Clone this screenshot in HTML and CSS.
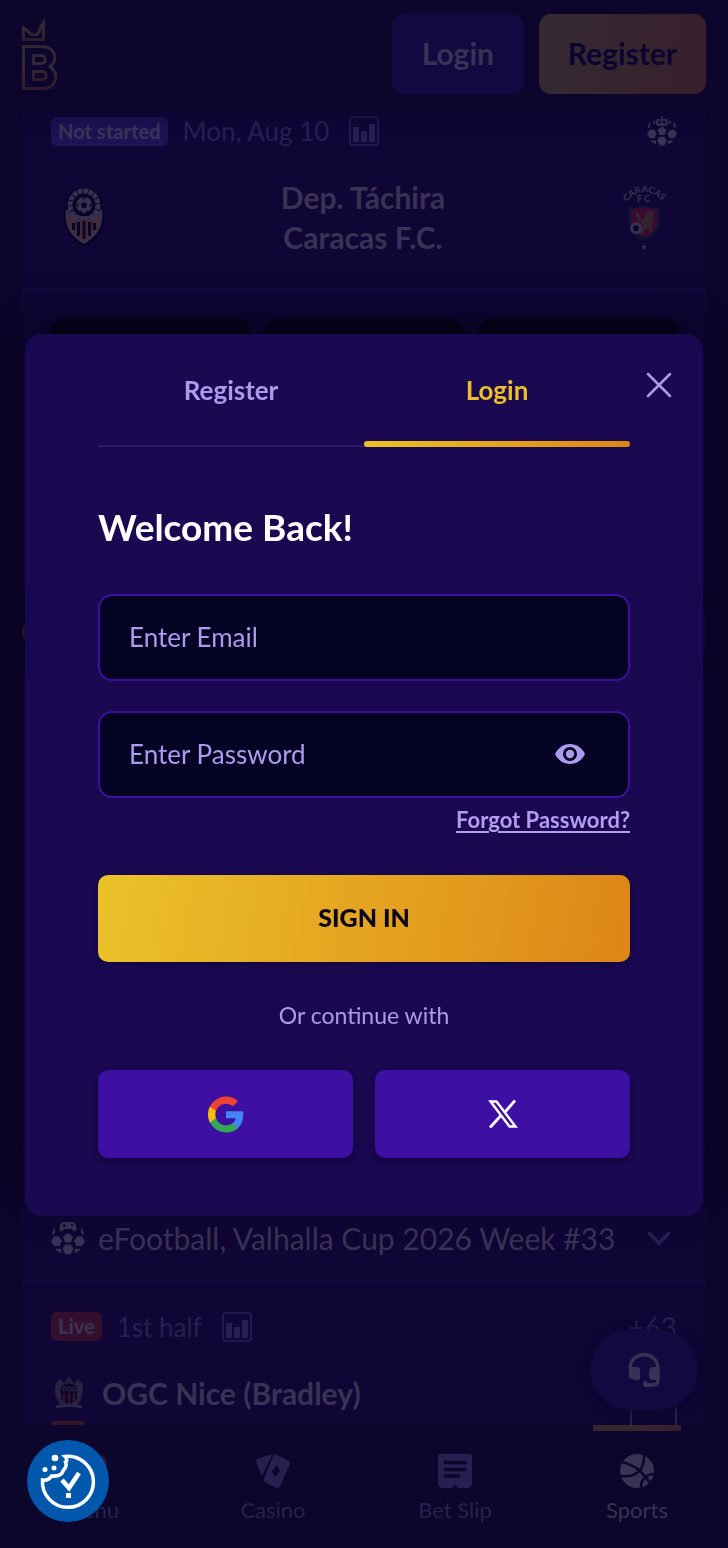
FILE: index.html
```html
<!DOCTYPE html>
<html lang="en">
<head>
<meta charset="utf-8">
<meta name="viewport" content="width=device-width, initial-scale=1">
<title>Login</title>
<link rel="stylesheet" href="styles.css">
</head>
<body>
<svg width="0" height="0" class="defs" aria-hidden="true">
  <defs>
    <linearGradient id="gold" x1="0" y1="0" x2="0" y2="1"><stop offset="0" stop-color="#302638"/><stop offset=".5" stop-color="#362736"/><stop offset="1" stop-color="#2f1b2b"/></linearGradient>
    <symbol id="ball" viewBox="0 0 34 34">
      <path d="M17 12l5 3.500-2 6h-6l-2-6zM3 15.500h5l3 4.500-2.500 5H3L0 20.500zM31 15.500h-5L23 20l2.500 5H31l3-4.500zM14 23.500h6l2.500 4.500-3 5.500h-5l-3-5.500zM3.500 6l.5 6-3 2q0-4 2.500-8zM30.500 6l-.5 6 3 2q0-4-2.500-8zM4 28l6-.5.500 4.500q-4-1-6.500-4zM30 28l-6-.5-.5 4.500q4-1 6.500-4z"/>
    </symbol>
    <symbol id="stats" viewBox="0 0 30 30">
      <rect x="1" y="1" width="28" height="28" rx="3" fill="none" stroke="currentColor" stroke-width="1.5"/>
      <path fill="currentColor" d="M4 11h6v15H4zM12 15h6v11h-6zM20 8h6v18h-6z"/>
    </symbol>
  </defs>
</svg>

<header class="topbar">
  <svg class="logo" width="36" height="72" viewBox="0 0 36 72" fill="none" stroke="url(#gold)" stroke-width="3" role="img" aria-label="Home">
    <path d="M1.500 21.500V10l4.500 3c3 6 11 5 12-2 0-2 1-3 3.500-6v16.500z"/>
    <path d="M1.500 28.500H20c13 0 17 14 8 20 10 8 6 22-7 22H1.500z"/>
    <path d="M11.500 37.500h8c5 0 5 8 0 8h-8zM11.500 53.500h9c5 0 5 8 0 8h-9z"/>
  </svg>
  <div class="actions">
    <button class="top-btn top-login" type="button">Login</button>
    <button class="top-btn top-register" type="button">Register</button>
  </div>
</header>

<main class="feed">
  <section class="card card-match">
    <div class="meta">
      <span class="badge">Not started</span>
      <span class="when">Mon, Aug 10</span>
      <svg class="stats" width="30" height="30"><use href="#stats"/></svg>
      <svg class="push dim" width="30" height="30" viewBox="0 0 34 34" fill="currentColor"><use href="#ball" width="34" height="34"/><path fill-rule="evenodd" d="M16 0h2v3h3q3 0 3 3v2q0 3-3 3h-8q-3 0-3-3V6q0-3 3-3h3zM13 5.500v3h3v-3zM18 5.500v3h3v-3zM7 5h2v4H7zM25 5h2v4h-2z"/></svg>
    </div>
    <div class="teams">
      <svg width="42" height="60" viewBox="0 0 42 60">
        <path d="M21 1c11 0 18 8 18 17 3 4 2 9 2 17C39 46 30 55 21 60 12 55 3 46 1 35c0-8-1-13 2-17C3 9 10 1 21 1z" fill="#080322"/>
        <circle cx="21" cy="18" r="14" fill="none" stroke="#37324f" stroke-width="5" stroke-dasharray="4.500 .9"/>
        <path d="M3 22q9 8 18 7 9 1 18-7c2 18-5 27-18 35C8 49 1 40 3 22z" fill="#373150"/>
        <path d="M5 25l3 2v7q13-5 26 0v-7l3-2c1 15-4 22-16 29C9 47 4 40 5 25z" fill="#432936"/>
        <path d="M8 28q6 4 13 4t13-4v3q-13-4-26 0z" fill="#373150"/>
        <path d="M10.500 36v7M15.500 35v14M21 34v18M26.500 35v14M31.500 36v7" stroke="#0a0426" stroke-width="3"/>
        <circle cx="21" cy="18" r="9.500" fill="#373150" stroke="#0a0426" stroke-width="3"/>
        <path d="M21 15l3 2-1 4h-4l-1-4zM18 10.500h6l-3 2zM13 16l2.500 1-.5 4zM29 16l-2.500 1 .5 4zM16 24l2.500-.5.500 2.500zM26 24l-2.500-.5-.5 2.500z" fill="#0a0426"/>
      </svg>
      <div class="names"><div>Dep. Táchira</div><div>Caracas F.C.</div></div>
      <svg class="crest" width="46" height="66" viewBox="0 0 46 66">
        <path id="arc" d="M5 19Q23-3 43 19" fill="none"/>
        <text class="crest-text"><textPath href="#arc" startOffset="1">CARACAS</textPath></text>
        <text class="crest-text" x="16" y="18">F C</text>
        <path d="M7 22l6 1 10-3 10 3 6-1 1 10c1 14-5 23-17 25C11 55 5 46 6 32z" fill="#081037"/>
        <path d="M10 25l13-2 13 2 1 9c0 11-4 17-14 20C13 51 9 45 9 34z" fill="#380b30"/>
        <path d="M14 26l4 4 2 5 3 1 1-6 4-3 5 2-2 5 2 3-3 3 2 8h-3l-2-5-3 2-2 5h-4l4-8-2-4-5-4z" fill="#35242f"/>
        <circle cx="15" cy="44" r="6" fill="#373150"/><path d="M15 41l3 2-1 4h-4l-1-4z" fill="#0a0426"/>
        <path d="M23 60l1 2h2l-2 2v2l-1-1-2 1 1-2-2-2h2z" fill="#373038"/>
      </svg>
    </div>
    <div class="odds"><span></span><span></span><span></span></div>
  </section>

  <div class="strip"><i class="dot"></i><i class="more"></i></div>
  <section class="card card-mid"></section>

  <section class="card">
    <div class="league">
      <svg class="dim" width="34" height="34" viewBox="0 0 34 34" fill="currentColor"><use href="#ball" width="34" height="34"/><path fill-rule="evenodd" d="M12 1h10q3 0 3.500 6 0 4-3 3l-2-2h-7l-2 2q-3 1-3-3Q9 1 12 1zM12 3.500v2.500h2.500V3.500zM20 3v2h2V3z"/></svg>
      <span>eFootball, Valhalla Cup 2026 Week #33</span>
      <svg class="push soft" width="24" height="14" viewBox="0 0 24 14" fill="none" stroke="currentColor" stroke-width="3.500"><path d="M1.500 1.500L12 12 22.500 1.500"/></svg>
    </div>
    <div class="meta meta-live">
      <span class="badge badge-live">Live</span>
      <span class="when">1st half</span>
      <svg class="stats" width="30" height="30"><use href="#stats"/></svg>
      <span class="push count">+63</span>
    </div>
    <div class="fixture">
      <div class="sides">
        <div class="side">
          <svg width="36" height="34" viewBox="0 0 36 34"><path d="M10 3C2 6 2 18 9 29h18C34 18 34 6 26 3l-3 5-5-8-5 8z" fill="#252040"/><path d="M6 8q-1 11 7 18M30 8q1 11-7 18M10 6q-1 9 4 14M26 6q1 9-4 14" stroke="#302b46" fill="none"/><path d="M10 10l8-3 8 3v13l-8 6-8-6z" fill="#0a0426"/><path d="M13 17v9M18 17v11M23 17v9" stroke="#3a1030" stroke-width="2.500"/><path d="M12 11h3v4h-3zM17 11h3v4h-3zM22 11h3v4h-3z" fill="none" stroke="#302b46"/><path d="M5 31q13-3 26 0" fill="none" stroke="#2b2644" stroke-width="3"/></svg>
          <span>OGC Nice (Bradley)</span>
        </div>
        <div class="side"><i class="crest-next"></i></div>
      </div>
      <div class="score"></div>
    </div>
  </section>
</main>

<button class="chat" type="button" aria-label="Support chat">
  <svg width="32" height="34" viewBox="0 0 32 34"><path d="M2 16C2-3 30-3 30 16v11q0 5-5 5h-8" fill="none" stroke="currentColor" stroke-width="3.500"/><path fill="currentColor" d="M1 14h7q4 0 4 3v7q0 4-4 3l-7-2zM31 14h-6q-4 0-4 4v5q0 4 4 4h6zM16 28h2q1 3 4 2v4h-5q-2-1-2-3 0-2 1-3z"/></svg>
</button>

<nav class="tabbar">
  <a class="nav-item" href="#menu">
    <svg width="34" height="34" viewBox="0 0 34 34"><path d="M1 15h20v4H1zM1 25h28v4H1zM1 5h14v4H1z" fill="currentColor"/><circle cx="25" cy="9" r="8" fill="#281840"/></svg>
    <span>Menu</span>
  </a>
  <a class="nav-item" href="#casino">
    <svg width="34" height="34" viewBox="0 0 34 34"><path fill="currentColor" d="M1 5L13 1q4-1 2 2L7 20q-1 2-2 0L0 8q0-2 1-3z"/><path fill="currentColor" fill-rule="evenodd" d="M19 0l14 7q1 1 1 3L24 32q-1 2-3 2L9 28q-2-1-1-3L17 2q1-2 2-2zM21 11l-5 6 3 6 5-6z"/></svg>
    <span>Casino</span>
  </a>
  <a class="nav-item" href="#slip">
    <svg width="34" height="34" viewBox="0 0 34 34"><path fill="currentColor" d="M2 0h30q2 0 2 2v29l-3 3H20q-3-6-6 0H3l-3-3V2q0-2 2-2z"/><path d="M7 8.500h20M7 15.500h20M7 22h14" stroke="#0c052c" stroke-width="3.500" stroke-linecap="round"/></svg>
    <span>Bet Slip</span>
  </a>
  <a class="nav-item active" href="#sports">
    <svg width="34" height="34" viewBox="0 0 34 34"><circle cx="17" cy="17" r="17" fill="currentColor"/><path d="M2 8C18 12 24 20 32 32M24-1c1 15-5 25-24 23M21 35c-1-9 5-15 14-15" fill="none" stroke="#0c052c" stroke-width="2.500"/></svg>
    <span>Sports</span>
  </a>
</nav>

<div class="overlay">
  <section class="modal" role="dialog" aria-modal="true" aria-labelledby="title">
    <div class="tabs" role="tablist">
      <button class="tab" type="button" role="tab" aria-selected="false">Register</button>
      <button class="tab selected" type="button" role="tab" aria-selected="true">Login</button>
    </div>
    <button class="close" type="button" aria-label="Close">
      <svg width="26" height="26" viewBox="0 0 26 26" fill="none" stroke="currentColor" stroke-width="2.500" stroke-linecap="round"><path d="M2 2l22 22M24 2L2 24"/></svg>
    </button>
    <form class="form">
      <h1 class="title" id="title">Welcome Back!</h1>
      <div class="field"><input class="input" type="email" placeholder="Enter Email" aria-label="Email"></div>
      <div class="field">
        <input class="input" type="password" placeholder="Enter Password" aria-label="Password">
        <button class="reveal" type="button" aria-label="Show password">
          <svg width="30" height="22" viewBox="0 0 30 22"><path fill="currentColor" fill-rule="evenodd" d="M15 1c7 0 12 4 15 10-3 6-8 10-15 10S3 17 0 11C3 5 8 1 15 1zm0 3a7 7 0 1 0 0 14 7 7 0 0 0 0-14z"/><circle cx="15" cy="11" r="4.200" fill="currentColor"/></svg>
        </button>
      </div>
      <a class="forgot" href="#forgot">Forgot Password?</a>
      <button class="submit" type="button">SIGN IN</button>
      <p class="or">Or continue with</p>
      <div class="socials">
        <button class="social" type="button" aria-label="Google">
          <svg width="36" height="37" viewBox="1 1 22 22"><path fill="#4285f4" d="M22.560 12.250c0-.78-.07-1.530-.2-2.250H12v4.260h5.920c-.26 1.370-1.040 2.530-2.210 3.310v2.770h3.570c2.080-1.920 3.280-4.740 3.280-8.090z"/><path fill="#34a853" d="M12 23c2.970 0 5.460-.98 7.280-2.660l-3.570-2.770c-.98.66-2.230 1.060-3.710 1.060-2.860 0-5.290-1.930-6.160-4.530H2.180v2.840C3.990 20.530 7.700 23 12 23z"/><path fill="#fbbc05" d="M5.840 14.090c-.22-.66-.35-1.360-.35-2.090s.13-1.430.35-2.090V7.070H2.180C1.430 8.550 1 10.220 1 12s.43 3.450 1.180 4.930z"/><path fill="#ea4335" d="M12 5.380c1.620 0 3.060.56 4.210 1.640l3.150-3.150C17.450 2.090 14.970 1 12 1 7.700 1 3.990 3.470 2.180 7.070l3.660 2.840c.87-2.600 3.300-4.530 6.160-4.530z"/></svg>
        </button>
        <button class="social" type="button" aria-label="X">
          <svg width="30" height="28" viewBox="0 0 30 28"><path fill="none" stroke="#fff" stroke-width="2.400" d="M2.500 1.500h6l19 25h-6z"/><path d="M27 .500L17 12M13 15.500L2 27.500" stroke="#fff" stroke-width="2.800"/></svg>
        </button>
      </div>
    </form>
  </section>
</div>

<button class="cookie" type="button" aria-label="Cookie preferences">
  <svg width="82" height="82" viewBox="0 0 82 82" fill="none" stroke="#fff" stroke-width="3.500"><path d="M38 16.500A25.500 25.500 0 1 1 15.500 40q6 1 9-4 10 1 12-6 4-4 2-8 3-2-.5-5.500z"/><path d="M35 40l7 8 10-15" stroke-width="4.500"/><path d="M39 53h5v5h-5z" fill="#fff" stroke="none"/><g fill="#fff" stroke="none"><circle cx="28" cy="18" r="3.300"/><circle cx="18" cy="29.500" r="2.500"/><circle cx="27" cy="28" r="2.500"/></g></svg>
</button>
</body>
</html>
```

FILE: styles.css
```css
:root {
  --page: #0c052c;
  --card: #0f0636;
  --dim: #393254;
  --soft: #262050;
  --lilac: #ae9aec;
  --gold: linear-gradient(100deg, #ebc22a, #dd8616);
}

* { box-sizing: border-box; }

body {
  margin: 0;
  height: 100vh;
  overflow: hidden;
  background: var(--page);
  color: var(--dim);
  font-family: Lato, "Open Sans", sans-serif;
}

button { border: 0; padding: 0; background: none; color: inherit; font: inherit; cursor: pointer; }
svg { display: block; flex: none; }
a { color: inherit; }
.defs { position: absolute; }
.push { margin-left: auto; }
.dim { color: var(--dim); }
.soft { color: var(--soft); }

.topbar {
  position: relative;
  display: flex;
  align-items: center;
  justify-content: space-between;
  height: 108px;
  padding: 0 22px;
  box-shadow: 0 4px 16px var(--page);
}
.actions { display: flex; gap: 15px; }
.top-btn {
  min-width: 132px;
  height: 80px;
  padding: 0 29px 3px;
  border-radius: 12px;
  font-size: 30px;
  font-weight: 700;
}
.top-login { background: #140842; }
.top-register { background: linear-gradient(100deg, #342a31, #381f2c); color: #0a0430; }

.feed { display: flex; flex-direction: column; padding: 0 22px; }
.card { background: var(--card); }
.card-match { height: 480px; }
.card-mid { height: 514px; }

.meta {
  display: flex;
  align-items: center;
  gap: 15px;
  height: 46px;
  padding: 0 29px;
}
.meta-live { height: 87px; }
.badge {
  padding: 0 7px;
  border-radius: 6px;
  background: #1e1154;
  font-size: 20px;
  font-weight: 900;
  line-height: 29px;
}
.badge-live { background: #340e2d; }
.when { color: var(--soft); font-size: 26px; }
.stats { margin-left: 5px; color: var(--soft); }
.count { color: var(--soft); font-size: 28px; }

.teams {
  display: flex;
  align-items: center;
  justify-content: space-between;
  height: 136px;
  padding: 0 39px 8px 41px;
  border-bottom: 2px solid #13083f;
}
.names { text-align: center; font-size: 30px; font-weight: 700; line-height: 40px; }
.crest { overflow: visible; }
.crest-text { fill: #37314d; font-family: Lato, sans-serif; font-size: 9px; font-weight: 900; }

.odds { display: grid; grid-template-columns: repeat(3, 1fr); gap: 15px; padding: 29px; }
.odds span { height: 80px; border-radius: 12px; background: #060318; }

.strip { display: flex; align-items: center; justify-content: space-between; height: 64px; margin: 12px 0; }
.dot { width: 28px; height: 28px; border: 3px solid #25203c; border-radius: 50%; }
.more { width: 120px; height: 64px; border-radius: 12px; background: #110739; }

.league {
  display: flex;
  align-items: center;
  gap: 13px;
  height: 93px;
  padding: 4px 35px 0 29px;
  border-bottom: 2px solid #13083f;
  font-size: 30px;
}
.fixture { display: flex; justify-content: space-between; padding: 0 29px; }
.side { display: flex; align-items: center; gap: 15px; height: 45px; font-size: 30px; font-weight: 700; }
.crest-next { width: 34px; height: 34px; border-radius: 4px; background: #341629; }
.score { width: 47px; border: 1px solid #2b2548; border-width: 0 2px; }

.chat {
  position: fixed;
  right: 30px;
  bottom: 138px;
  display: grid;
  place-items: center;
  width: 108px;
  height: 80px;
  border-radius: 40px;
  background: #140840;
  box-shadow: 0 2px 12px #0c052c;
}

.tabbar {
  position: fixed;
  inset: auto 0 0;
  display: grid;
  grid-template-columns: repeat(4, 1fr);
  height: 123px;
  background: var(--page);
}
.nav-item {
  position: relative;
  display: flex;
  flex-direction: column;
  align-items: center;
  gap: 8px;
  padding-top: 29px;
  color: var(--soft);
  font-size: 22px;
  line-height: 28px;
  text-decoration: none;
}
.active { color: var(--dim); }
.active::before {
  content: "";
  position: absolute;
  top: 0;
  width: 88px;
  height: 6px;
  background: linear-gradient(90deg, #35292f, #371f2c);
}

.overlay {
  position: fixed;
  inset: 0;
  display: grid;
  align-items: center;
  padding: 2px 25px 0;
}
.modal {
  position: relative;
  padding: 0 73px 58px;
  border-radius: 16px;
  background: #1a0850;
  box-shadow: 0 -16px 40px rgba(3, 1, 16, .6);
}
.tabs { display: grid; grid-template-columns: 1fr 1fr; height: 113px; }
.tab {
  border-bottom: 2px solid #2e1b68;
  color: var(--lilac);
  font-size: 26px;
  font-weight: 700;
}
.selected {
  position: relative;
  color: #ebbf2a;
}
.selected::after {
  content: "";
  position: absolute;
  inset: auto 0 -2px;
  height: 6px;
  border-radius: 3px;
  background: var(--gold);
}
.close { position: absolute; top: 38px; right: 31px; color: var(--lilac); }

.form { display: flex; flex-direction: column; }
.title { margin: 56px 0 44px; color: #fff; font-size: 37px; font-weight: 700; line-height: 47px; }
.field { position: relative; margin-bottom: 30px; }
.input {
  display: block;
  width: 100%;
  height: 87px;
  padding: 0 90px 2px 29px;
  border: 2px solid #3c109c;
  border-radius: 14px;
  background: #050424;
  color: #fff;
  font: 26px Lato, "Open Sans", sans-serif;
}
.input::placeholder { color: var(--lilac); opacity: 1; }
.reveal { position: absolute; top: 32px; right: 45px; color: var(--lilac); }
.forgot {
  align-self: flex-end;
  margin-top: -22px;
  color: #b39cf2;
  font-size: 22px;
  font-weight: 700;
  line-height: 28px;
  text-decoration-thickness: 2px;
  text-underline-offset: 3px;
}
.submit {
  height: 87px;
  margin-top: 41px;
  padding-bottom: 3px;
  border-radius: 10px;
  background: var(--gold);
  color: #08041f;
  font-size: 25px;
  font-weight: 900;
  box-shadow: 0 2px 4px rgba(5, 3, 30, .4);
}
.or { margin: 38px 0 40px; color: var(--lilac); font-size: 23px; line-height: 30px; text-align: center; }
.socials { display: grid; grid-template-columns: 1fr 1fr; gap: 22px; }
.social {
  display: grid;
  place-items: center;
  height: 88px;
  border-radius: 10px;
  background: #3d0fa3;
  box-shadow: 0 3px 6px rgba(5, 3, 30, .4);
}

.cookie {
  position: fixed;
  left: 27px;
  bottom: 26px;
  border-radius: 50%;
  background: #0057ac;
}
```
